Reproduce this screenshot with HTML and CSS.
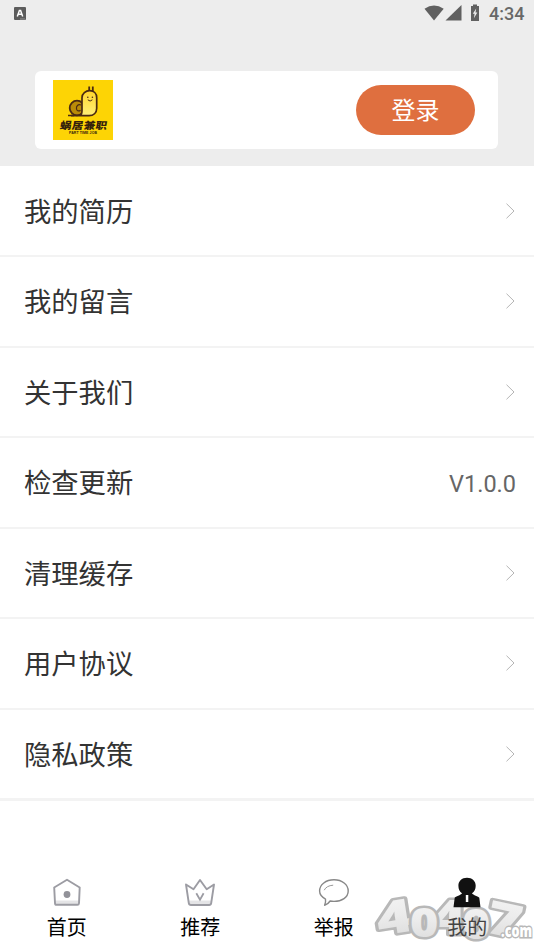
FILE: index.html
```html
<!DOCTYPE html>
<html lang="zh-CN">
<head>
<meta charset="utf-8">
<title>我的</title>
<link rel="stylesheet" href="styles.css">
</head>
<body>
<div class="app">
  <header class="header">
    <div class="status">
      <svg class="notice" width="12" height="13" viewBox="0 0 12 13"><rect width="12" height="13" rx="1" fill="#5c5c5c"/><path d="M3.3 9.5 5.4 3.5h1.2l2.1 6M4.3 7.3h3.4" fill="none" stroke="#fff" stroke-width="1.5"/><path d="M6 12h5" stroke="#aaa" stroke-width=".7"/></svg>
      <svg class="signals" width="58" height="18" viewBox="0 0 58 18" fill="#606060"><path d="M.5 4.7Q10 -1.6 19.700 4.700L10 16.500Z"/><path d="M37.500 1v15.500h-16Z"/><path d="M47 2h2V.5h4V2h2v15h-8Z"/><path d="m52.200 4.500-3.400 5.300h1.800l-.7 4.500 3.400-5.700h-1.800Z" fill="#ededed"/></svg>
      <span class="time">4:34</span>
    </div>
    <section class="card">
      <svg class="logo" width="60" height="60" viewBox="0 0 60 60">
        <rect width="60" height="60" fill="#fdd405"/>
        <defs><linearGradient id="snail" x2="0" y2="1"><stop stop-color="#ffd52c"/><stop offset="1" stop-color="#fff078"/></linearGradient></defs>
        <path d="M15 35.500h6" stroke="#4a2a12" stroke-width="1.500"/>
        <circle cx="24" cy="28" r="7.300" fill="#b98b08" stroke="#4a2a12" stroke-width="1.800"/>
        <path d="M28 25c-3-1-5 1-4.500 4 .4 2 2.500 2.500 4 1.200" fill="none" stroke="#4a2a12" stroke-width="1.200"/>
        <path d="M36.200 12V6.500M39.800 12V6.500" stroke="#4a2a12" stroke-width="1.800"/>
        <path d="M18 35.700h18c4.500 0 7.700-3 7.700-7.500V17.700c0-4.300-3-7-7-7s-7.700 2.800-7.700 7v13c0 3-1 5-3 5Z" fill="url(#snail)" stroke="#4a2a12" stroke-width="1.700"/>
        <circle cx="34.800" cy="17.300" r=".8" fill="#4a2a12"/><circle cx="39.400" cy="17.300" r=".8" fill="#4a2a12"/><path d="M34.800 19.800q2.300 2.500 4.600 0" fill="none" stroke="#4a2a12" stroke-width="1"/>
        <text class="logo-name" transform="translate(6.500 49) skewX(-10) scale(1 .86)" textLength="47">蜗居兼职</text>
        <text class="logo-sub" x="16" y="54" textLength="28">PART TIME JOB</text>
      </svg>
      <button class="login">登录</button>
    </section>
  </header>
  <main class="menu">
    <div class="row"><span>我的简历</span><svg class="chevron" viewBox="0 0 9 16"><path d="m.5.700 7.500 7.300-7.500 7.300"/></svg></div>
    <div class="row"><span>我的留言</span><svg class="chevron" viewBox="0 0 9 16"><path d="m.5.700 7.500 7.300-7.500 7.300"/></svg></div>
    <div class="row"><span>关于我们</span><svg class="chevron" viewBox="0 0 9 16"><path d="m.5.700 7.500 7.300-7.500 7.300"/></svg></div>
    <div class="row"><span>检查更新</span><span class="version">V1.0.0</span></div>
    <div class="row"><span>清理缓存</span><svg class="chevron" viewBox="0 0 9 16"><path d="m.5.700 7.500 7.300-7.500 7.300"/></svg></div>
    <div class="row"><span>用户协议</span><svg class="chevron" viewBox="0 0 9 16"><path d="m.5.700 7.500 7.300-7.500 7.300"/></svg></div>
    <div class="row"><span>隐私政策</span><svg class="chevron" viewBox="0 0 9 16"><path d="m.5.700 7.500 7.300-7.500 7.300"/></svg></div>
  </main>
  <nav class="tabs">
    <a class="tab"><svg class="icon" viewBox="0 0 32 32"><path d="M4 25.500h24" stroke="#e4e4e6" stroke-width="4"/><path d="M3.200 10.500 16 2.700l12.700 7.800-.7 15.700q-.1 1.600-1.600 1.600H5.600Q4 27.800 4 26.200Z" fill="none" stroke="#9c9ca3" stroke-width="1.900" stroke-linejoin="round"/><circle cx="16" cy="17.500" r="3.400" fill="#929299"/></svg><span>首页</span></a>
    <a class="tab"><svg class="icon" viewBox="0 0 32 32"><path d="M5 25.500h22" stroke="#e4e4e6" stroke-width="4"/><path d="M2 7.500l7.500 4.800L16 3l6.700 9.300L30 7.500l-2.800 18.600q-.3 1.900-2.100 1.900H7Q5.100 28 4.800 26.100Z" fill="none" stroke="#9c9ca3" stroke-width="1.900" stroke-linejoin="round"/><path d="m12.300 16.200 3.700 6.500 3.600-6.500" fill="none" stroke="#9c9ca3" stroke-width="1.800"/></svg><span>推荐</span></a>
    <a class="tab"><svg class="icon" viewBox="0 0 32 32"><path d="M7.500 22.100C3.700 20 1.600 17.200 1.600 14 1.600 7.500 7.900 2.800 16 2.800S30.200 7.700 30.200 14 23.800 24.400 16 24.400q-2 0-3.900-.4-2.200 3.400-5.500 4.200Q8 25.500 7.500 22.100Z" fill="none" stroke="#888" stroke-width="1.400" stroke-linejoin="round"/><path d="M6.200 13.200Q8.500 8.600 15.200 8.200" fill="none" stroke="#999" stroke-width="1"/></svg><span>举报</span></a>
    <a class="tab mine"><svg class="icon" viewBox="0 0 32 32"><path d="M16 .7c5.200 0 8.700 3.300 8.700 8 0 3.500-1.400 6-3.700 7.500 1 2 6.500 3 7.300 4.500l1.200 9.600H2.500l1.200-9.600c.8-1.500 6.300-2.500 7.300-4.500C8.700 14.700 7.400 12.200 7.400 8.700c0-4.700 3.400-8 8.600-8Z" fill="#111"/><path d="M14.800 18h2.500v7h-2.500Z" fill="#fff"/></svg><span>我的</span></a>
  </nav>
  <svg class="watermark" width="160" height="60" viewBox="0 0 160 60">
    <defs><linearGradient id="silver" x2="0" y2="1"><stop stop-color="#f7f7f7"/><stop offset=".5" stop-color="#ebebeb"/><stop offset="1" stop-color="#d8d8d8"/></linearGradient></defs>
    <g class="digits" fill="url(#silver)">
      <text transform="translate(5 46) rotate(-9) scale(1.350 1)" font-size="46">4</text>
      <text transform="translate(57 44) scale(1.250 1)" font-size="48">4</text>
      <text transform="translate(110 42) rotate(12) scale(1.300 1)" font-size="46">7</text>
      <text transform="translate(36 47) scale(1.180 1)" font-size="41">0</text>
      <text transform="translate(88 49) scale(1.150 1)" font-size="42">0</text>
    </g>
    <text class="domain" x="127" y="47" textLength="31" lengthAdjust="spacingAndGlyphs">.com</text>
  </svg>
</div>
</body>
</html>
```

FILE: styles.css
```css
* { box-sizing: border-box; }
body { margin: 0; background: #fff; font-family: Roboto, "Noto Sans CJK SC", sans-serif; }
.app { position: relative; width: 534px; height: 950px; overflow: hidden; display: flex; flex-direction: column; }
.header { height: 166px; background: #ededed; flex: none; }
.status { height: 71px; display: flex; align-items: flex-start; padding: 4px 9px 0 14px; }
.notice { margin-top: 3px; }
.signals { margin-left: auto; }
.time { width: 36px; margin-left: 7px; font-size: 18px; line-height: 20px; font-weight: 500; color: #686868; white-space: nowrap; }
.card { height: 78px; margin: 0 36px 0 35px; padding: 0 23px 0 18px; border-radius: 6px; background: #fff; display: flex; align-items: center; justify-content: space-between; }
.logo-name { font: 900 11.5px "Noto Sans CJK SC", sans-serif; fill: #35210c; }
.logo-sub { font: bold 3.5px "Liberation Sans", sans-serif; fill: #35210c; }
.login { width: 119px; height: 50px; padding: 0 0 2px; border: 0; border-radius: 25px; background: #df6f3f; color: #fff; font: 24px/48px "Noto Sans CJK SC", sans-serif; }
.menu { flex: none; padding-top: .5px; }
.row { height: 90.5px; padding: 4px 19px 0 24px; display: flex; align-items: center; justify-content: space-between; border-bottom: 2px solid #f3f3f3; font-size: 27.3px; line-height: 40px; color: #333; }
.row:last-child { height: 91.5px; border-bottom-width: 3px; }
.chevron { width: 9px; height: 16px; margin-bottom: 4px; fill: none; stroke: #b5b5b5; stroke-width: 1; }
.version { margin: 0 -1px 1px 0; font-size: 23.5px; color: #666; }
.tabs { display: grid; grid-template-columns: repeat(4, 1fr); margin-top: 76px; }
.tab { display: flex; flex-direction: column; align-items: center; color: #000; font-size: 20px; line-height: 30px; }
.icon { width: 32px; height: 32px; margin-bottom: 4px; }
.mine { color: #444; }
.mine .icon,
.mine span { position: relative; z-index: 2; }
.watermark { position: absolute; left: 374px; top: 890px; overflow: visible; font-family: "Open Sans", sans-serif; font-weight: 800; }
.digits { stroke: #b8b8b8; stroke-width: 5; stroke-linejoin: round; paint-order: stroke; }
.domain { font-size: 17px; fill: #fff; stroke: #b8b8b8; stroke-width: 3; paint-order: stroke; }
```
